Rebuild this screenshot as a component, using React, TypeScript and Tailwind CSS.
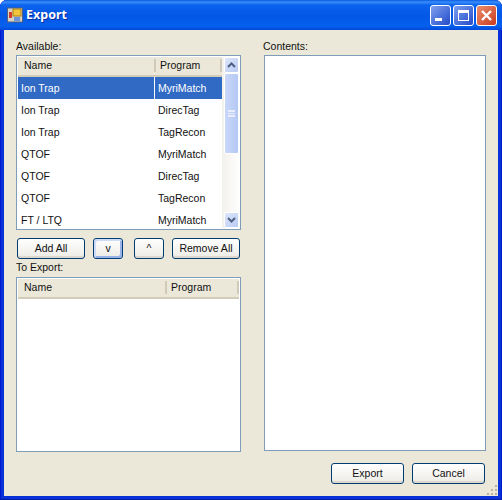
const rows = [
  ['Ion Trap', 'MyriMatch'],
  ['Ion Trap', 'DirecTag'],
  ['Ion Trap', 'TagRecon'],
  ['QTOF', 'MyriMatch'],
  ['QTOF', 'DirecTag'],
  ['QTOF', 'TagRecon'],
  ['FT / LTQ', 'MyriMatch'],
]

function Chevron({ up }: { up?: boolean }) {
  return (
    <svg width="9" height="6" viewBox="0 0 9 6" fill="none">
      <path
        d={up ? 'M1 5L4.5 1.5L8 5' : 'M1 1L4.5 4.5L8 1'}
        stroke="#4d6185"
        strokeWidth="2"
      />
    </svg>
  )
}

function ScrollButton({ up }: { up?: boolean }) {
  return (
    <div className="flex h-[16px] w-[15px] items-center justify-center rounded-[2px] border border-white bg-gradient-to-br from-[#dde6fb] to-[#b9caf3]">
      <Chevron up={up} />
    </div>
  )
}

function Header({ nameWidth }: { nameWidth: string }) {
  return (
    <div className="flex h-[20px] shrink-0 items-center border-b-2 border-b-[#d2cdb8] bg-[#ebe8d9] pb-[1px] text-[#111]">
      <div className={`${nameWidth} border-r-2 border-r-[#cfcbb8] pl-[6px] leading-[13px]`}>Name</div>
      <div className="flex-1 border-r-2 border-r-[#cfcbb8] pl-[4px] leading-[13px]">Program</div>
    </div>
  )
}

function XpButton({ label, className, focused }: { label: string; className: string; focused?: boolean }) {
  return (
    <button
      className={`${className} h-[21px] rounded-[3px] border border-[#003c74] bg-gradient-to-b from-white to-[#ecebe5] text-center leading-[17px] text-[#111] ${
        focused ? 'shadow-[inset_2px_2px_0_#cedcf7,inset_-2px_-2px_0_#9ab4ea]' : 'shadow-[inset_0_-2px_0_#dcd8cc]'
      }`}
    >
      {label}
    </button>
  )
}

function WindowButton({ className, children }: { className: string; children: React.ReactNode }) {
  return (
    <div className={`${className} flex h-[21px] w-[21px] items-center justify-center rounded-[3px] border border-white`}>
      {children}
    </div>
  )
}

export default function App() {
  return (
    <div
      className="flex h-[500px] w-[502px] flex-col overflow-hidden rounded-t-[7px] bg-[#0831d9] text-[10.5px] shadow-[inset_1px_0_0_#0019cf,inset_-1px_0_0_#0019cf,inset_0_-1px_0_#001ea0]"
      style={{ fontFamily: '"Liberation Sans", Arial, sans-serif' }}
    >
      {/* Title bar */}
      <div className="flex h-[30px] shrink-0 items-center bg-[linear-gradient(#0a5ae4_0px,#3b8df7_2px,#0a63ee_5px,#0357e6_16px,#0660ee_26px,#0348d8_30px)] pl-[7px] pr-[5px]">
        <svg width="16" height="16" viewBox="0 0 16 16" className="mr-[3px]">
          <rect x="0.5" y="1" width="15" height="14" fill="#d8d4c4" stroke="#54607c" />
          <rect x="6" y="2" width="8" height="7" fill="#f3c53a" stroke="#a77d12" />
          <rect x="2" y="5" width="3" height="6" fill="#d33c2c" />
          <rect x="7" y="10" width="6" height="4" fill="#6f93d8" />
        </svg>
        <span
          className="text-[12.5px] font-bold text-white [text-shadow:1px_1px_0_#0a2fa0]"
          style={{ fontFamily: '"Noto Sans", sans-serif' }}
        >
          Export
        </span>
        <div className="ml-auto flex gap-[2px]">
          <WindowButton className="bg-gradient-to-br from-[#7f9ff0] to-[#2549c8]">
            <div className="mt-[9px] mr-[5px] h-[3px] w-[7px] bg-white" />
          </WindowButton>
          <WindowButton className="bg-gradient-to-br from-[#7f9ff0] to-[#2549c8]">
            <div className="h-[11px] w-[11px] border border-t-[3px] border-white" />
          </WindowButton>
          <WindowButton className="bg-gradient-to-br from-[#ea8d6d] to-[#c8391a]">
            <svg width="13" height="13" viewBox="0 0 13 13">
              <path d="M2 2L11 11M11 2L2 11" stroke="white" strokeWidth="2.4" />
            </svg>
          </WindowButton>
        </div>
      </div>

      {/* Body */}
      <div className="relative mx-[4px] mb-[4px] flex min-h-0 flex-1 flex-col bg-[#ebe8d9] pl-[12px] pr-[12px] text-[#111]">
        <div className="flex pt-[10px]">
          {/* Left column */}
          <div className="w-[225px]">
            <div className="h-[15px] leading-[13px]">Available:</div>
            <div className="flex h-[175px] border border-[#7f9db9] bg-white p-[1px]">
              <div className="flex min-w-0 flex-1 flex-col">
                <Header nameWidth="w-[138px]" />
                {rows.map(([name, program], i) => (
                  <div key={i} className="flex h-[22px] shrink-0 items-center">
                    <div className={`flex h-full w-[136px] items-center pl-[3px] pt-[2px] ${i === 0 ? 'bg-[#316ac5] text-white' : ''}`}>
                      {name}
                    </div>
                    <div className={`ml-[1px] flex h-full w-[67px] items-center pl-[3px] pt-[2px] ${i === 0 ? 'bg-[#316ac5] text-white' : ''}`}>
                      {program}
                    </div>
                  </div>
                ))}
              </div>
              <div className="flex w-[17px] flex-col items-center bg-gradient-to-r from-[#f3f1ec] to-[#fefefe] pl-[1px]">
                <ScrollButton up />
                <div className="flex h-[81px] w-[15px] items-center justify-center rounded-[2px] border border-white bg-gradient-to-r from-[#c9d7f8] to-[#b5c8f5]">
                  <div className="h-[7px] w-[7px] border-y border-[#e8eefc] bg-[linear-gradient(#e8eefc_1px,transparent_1px)] bg-[length:7px_2px]" />
                </div>
                <div className="mt-auto">
                  <ScrollButton />
                </div>
              </div>
            </div>
            <div className="mt-[8px] flex h-[21px]">
              <XpButton label="Add All" className="ml-[1px] w-[68px]" />
              <XpButton label="v" className="ml-[8px] w-[30px]" focused />
              <XpButton label="^" className="ml-[11px] w-[30px]" />
              <XpButton label="Remove All" className="ml-[8px] w-[68px]" />
            </div>
            <div className="h-[18px] pt-[2px] leading-[13px]">To Export:</div>
            <div className="flex h-[175px] flex-col border border-[#7f9db9] bg-white p-[1px]">
              <Header nameWidth="w-[149px]" />
            </div>
          </div>

          {/* Right column */}
          <div className="ml-[23px] w-[222px]">
            <div className="-ml-[1px] h-[15px] leading-[13px]">Contents:</div>
            <div className="h-[396px] border border-[#7f9db9] bg-white" />
          </div>
        </div>

        {/* Bottom buttons */}
        <div className="mt-[11px] flex justify-end gap-[8px] pr-[1px]">
          <XpButton label="Export" className="w-[73px]" />
          <XpButton label="Cancel" className="w-[73px]" />
        </div>

        {/* Resize grip */}
        <svg width="12" height="12" viewBox="0 0 12 12" className="absolute bottom-0 right-0" fill="#b8b4a0">
          <rect x="9" y="1" width="2" height="2" />
          <rect x="5" y="5" width="2" height="2" />
          <rect x="9" y="5" width="2" height="2" />
          <rect x="1" y="9" width="2" height="2" />
          <rect x="5" y="9" width="2" height="2" />
          <rect x="9" y="9" width="2" height="2" />
        </svg>
      </div>
    </div>
  )
}
